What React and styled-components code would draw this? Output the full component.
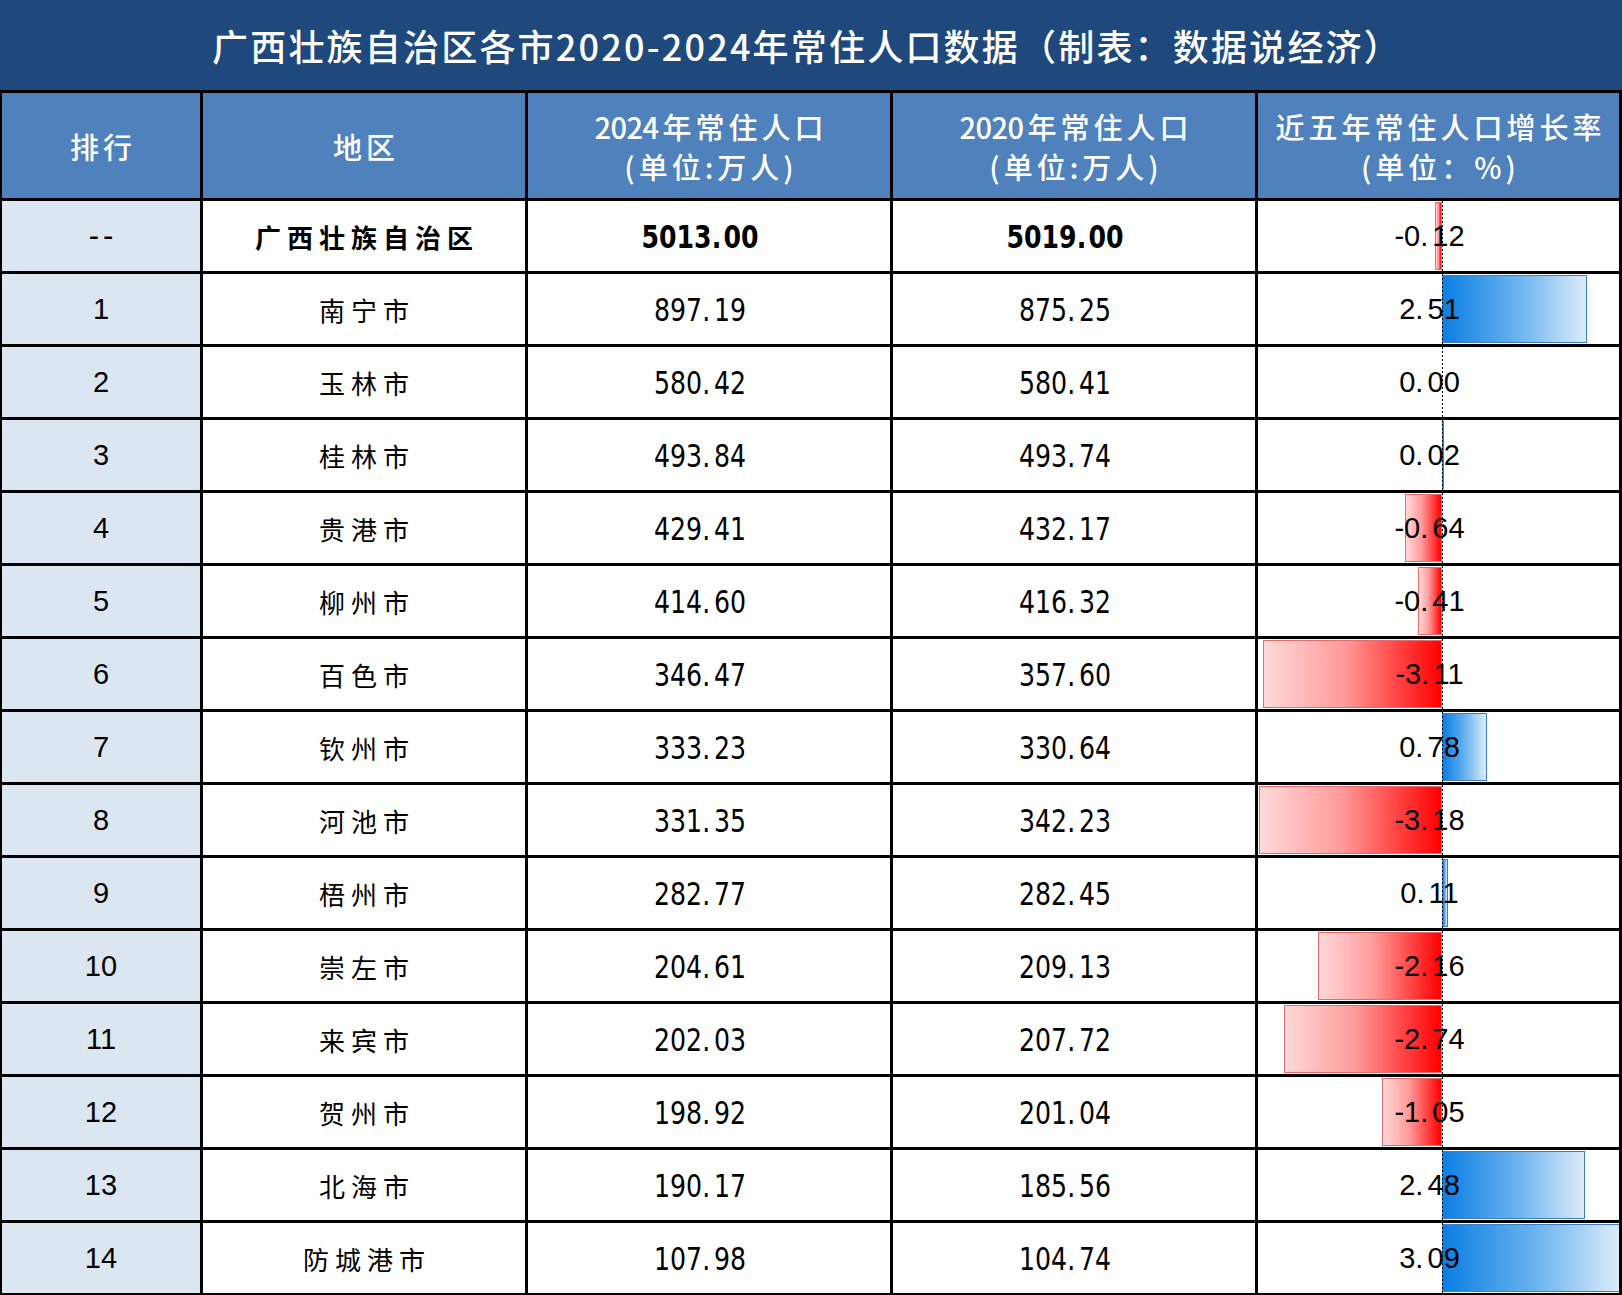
import styled, { createGlobalStyle } from "styled-components";

const GlobalStyle = createGlobalStyle`
  html, body {
    margin: 0;
    padding: 0;
    background: #fff;
  }
  body {
    font-family: "Noto Sans CJK SC", sans-serif;
  }
`;

const AXIS = 184;
const SCALE = 57.6;

const rows = [
  { rank: "--", name: "广西壮族自治区", y2024: "5013.00", y2020: "5019.00", rate: -0.12, total: true },
  { rank: "1", name: "南宁市", y2024: "897.19", y2020: "875.25", rate: 2.51 },
  { rank: "2", name: "玉林市", y2024: "580.42", y2020: "580.41", rate: 0.0 },
  { rank: "3", name: "桂林市", y2024: "493.84", y2020: "493.74", rate: 0.02 },
  { rank: "4", name: "贵港市", y2024: "429.41", y2020: "432.17", rate: -0.64 },
  { rank: "5", name: "柳州市", y2024: "414.60", y2020: "416.32", rate: -0.41 },
  { rank: "6", name: "百色市", y2024: "346.47", y2020: "357.60", rate: -3.11 },
  { rank: "7", name: "钦州市", y2024: "333.23", y2020: "330.64", rate: 0.78 },
  { rank: "8", name: "河池市", y2024: "331.35", y2020: "342.23", rate: -3.18 },
  { rank: "9", name: "梧州市", y2024: "282.77", y2020: "282.45", rate: 0.11 },
  { rank: "10", name: "崇左市", y2024: "204.61", y2020: "209.13", rate: -2.16 },
  { rank: "11", name: "来宾市", y2024: "202.03", y2020: "207.72", rate: -2.74 },
  { rank: "12", name: "贺州市", y2024: "198.92", y2020: "201.04", rate: -1.05 },
  { rank: "13", name: "北海市", y2024: "190.17", y2020: "185.56", rate: 2.48 },
  { rank: "14", name: "防城港市", y2024: "107.98", y2020: "104.74", rate: 3.09 },
];

const Page = styled.div`
  width: 1622px;
  background: #fff;
`;

const Title = styled.div`
  height: 90px;
  background: #1f497d;
  color: #fff;
  display: flex;
  align-items: center;
  justify-content: center;
  font-size: 36px;
  font-weight: 500;
  letter-spacing: 2.2px;
  padding-right: 8px;
`;

const Sheet = styled.div`
  display: grid;
  grid-template-columns: 198px 322px 362px 362px 361px;
  grid-template-rows: 105px repeat(15, 70px);
  gap: 3px;
  padding: 3px 3px 2px 2px;
  background: #000;
`;

const HeadCell = styled.div`
  background: #4f81bd;
  color: #fff;
  display: flex;
  flex-direction: column;
  align-items: center;
  justify-content: center;
  font-size: 29px;
  font-weight: 500;
  line-height: 40px;
  letter-spacing: 4px;
  padding-left: 4px;
`;

const HeadYear = styled.span`
  letter-spacing: -0.5px;
  margin-right: 4px;
`;

const Cell = styled.div`
  background: ${(p) => (p.shade ? "#dce6f1" : "#fff")};
  color: #000;
  display: flex;
  align-items: center;
  justify-content: center;
`;

const RankCell = styled(Cell)`
  font-family: "Liberation Sans", Arial, sans-serif;
  font-size: ${(p) => (p.dash ? "31px" : "29px")};
  letter-spacing: ${(p) => (p.dash ? "4px" : "0")};
  padding-left: ${(p) => (p.dash ? "4px" : "0")};
`;

const NameCell = styled(Cell)`
  font-size: 26px;
  font-weight: ${(p) => (p.bold ? 700 : 400)};
  letter-spacing: 6px;
  padding-left: 6px;
`;

const NumCell = styled(Cell)`
  font-family: "DejaVu Sans Condensed", "Liberation Sans", sans-serif;
  font-size: 28px;
  font-weight: ${(p) => (p.bold ? 700 : 400)};
  padding-right: 18px;
  padding-top: 2px;
`;

const Tall = styled.span`
  display: inline-block;
  transform: scaleY(1.15);
`;

const RateCell = styled(Cell)`
  position: relative;
  overflow: hidden;
  font-family: "Liberation Sans", Arial, sans-serif;
  font-size: 29px;
  padding-right: 18px;
`;

const Dot = styled.span`
  display: inline-block;
  width: ${(p) => p.w};
  text-align: left;
`;

const Bar = styled.div`
  position: absolute;
  top: 1px;
  bottom: 1px;
  box-sizing: border-box;
  border: 1px solid ${(p) => (p.neg ? "#e46c6c" : "#3a7fc0")};
  background: ${(p) =>
    p.neg
      ? "linear-gradient(to right, #ffd9d9 0%, #ff9a9a 45%, #ff0000 100%)"
      : "linear-gradient(to right, #0b7ee3 0%, #6fb6f0 55%, #dcebf9 100%)"};
`;

const Axis = styled.div`
  position: absolute;
  top: 0;
  bottom: 0;
  left: ${AXIS}px;
  width: 1px;
  background: repeating-linear-gradient(to bottom, #000 0 2px, transparent 2px 4px);
  z-index: 1;
`;

const RateText = styled.span`
  position: relative;
  z-index: 2;
`;

const Num = ({ value, w }) => {
  const [a, b] = value.split(".");
  return (
    <span>
      {a}
      <Dot w={w}>.</Dot>
      {b}
    </span>
  );
};

const RateBar = ({ rate }) => {
  const width = Math.abs(rate) * SCALE;
  if (width < 0.5) return null;
  const neg = rate < 0;
  return (
    <Bar
      neg={neg}
      style={{ left: neg ? AXIS - width : AXIS, width: Math.max(width, 1.5) }}
    />
  );
};

const App = () => (
  <Page>
    <GlobalStyle />
    <Title>广西壮族自治区各市2020-2024年常住人口数据（制表：数据说经济）</Title>
    <Sheet>
      <HeadCell>排行</HeadCell>
      <HeadCell>地区</HeadCell>
      <HeadCell>
        <div>
          <HeadYear>2024</HeadYear>年常住人口
        </div>
        <div>(单位:万人)</div>
      </HeadCell>
      <HeadCell>
        <div>
          <HeadYear>2020</HeadYear>年常住人口
        </div>
        <div>(单位:万人)</div>
      </HeadCell>
      <HeadCell>
        <div>近五年常住人口增长率</div>
        <div>(单位：%)</div>
      </HeadCell>
      {rows.map((r) => (
        <>
          <RankCell key={r.rank + "r"} shade dash={r.total}>
            {r.rank}
          </RankCell>
          <NameCell key={r.rank + "n"} bold={r.total}>
            {r.name}
          </NameCell>
          <NumCell key={r.rank + "a"} bold={r.total}>
            <Tall>
              <Num value={r.y2024} w="0.42em" />
            </Tall>
          </NumCell>
          <NumCell key={r.rank + "b"} bold={r.total}>
            <Tall>
              <Num value={r.y2020} w="0.42em" />
            </Tall>
          </NumCell>
          <RateCell key={r.rank + "c"}>
            <RateBar rate={r.rate} />
            <Axis />
            <RateText>
              <Num value={r.rate.toFixed(2)} w="0.42em" />
            </RateText>
          </RateCell>
        </>
      ))}
    </Sheet>
  </Page>
);

export default App;
